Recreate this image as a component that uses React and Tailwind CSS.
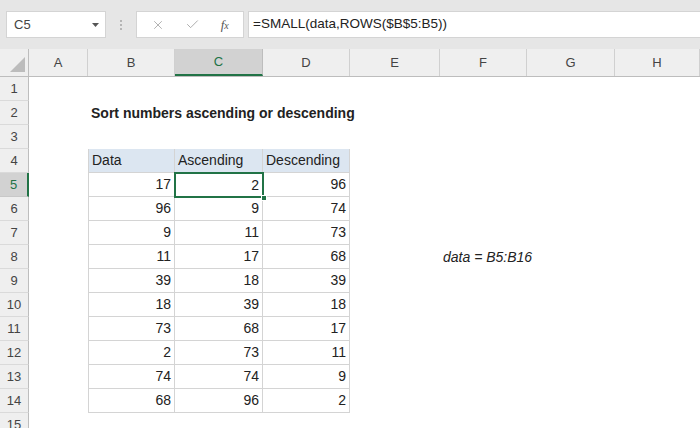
import { X, Check } from 'lucide-react';

const cols = ['A', 'B', 'C', 'D', 'E', 'F', 'G', 'H'];

const data = [
    [17, 2, 96],
    [96, 9, 74],
    [9, 11, 73],
    [11, 17, 68],
    [39, 18, 39],
    [18, 39, 18],
    [73, 68, 17],
    [2, 73, 11],
    [74, 74, 9],
    [68, 96, 2],
];

const gridCols = 'grid grid-cols-[29px_59px_87px_88px_87px_90px_87px_88px_85px]';

const RowHead = ({ n, active }) => (
    <div
        className={
            'flex items-center justify-center border-r border-b text-[13px] ' +
            (active
                ? 'border-b-[#c8c8c8] border-r-2 border-r-[#217346] bg-[#d2d2d2] text-[#217346]'
                : 'border-b-[#dadada] border-r-[#bdbdbd] bg-[#efefef] text-[#444]')
        }
    >
        {n}
    </div>
);

const Cell = ({ children, className = '' }) => (
    <div className={'flex items-center overflow-visible whitespace-nowrap px-[3px] text-[14px] text-[#222] ' + className}>
        {children}
    </div>
);

const tableCell = 'border-r border-b border-[#d4d4d4]';

export default function App() {
    const rows = [];
    for (let r = 1; r <= 15; r++) {
        let cells;
        if (r === 2) {
            cells = (
                <>
                    <Cell />
                    <Cell className="font-bold">Sort numbers ascending or descending</Cell>
                    <Cell />
                    <Cell />
                    <Cell />
                    <Cell />
                    <Cell />
                    <Cell />
                </>
            );
        } else if (r === 4) {
            cells = (
                <>
                    <Cell />
                    <Cell className={tableCell + ' border-l bg-[#dce6f1]'}>Data</Cell>
                    <Cell className={tableCell + ' bg-[#dce6f1]'}>Ascending</Cell>
                    <Cell className={tableCell + ' bg-[#dce6f1]'}>Descending</Cell>
                    <Cell />
                    <Cell />
                    <Cell />
                    <Cell />
                </>
            );
        } else if (r >= 5 && r <= 14) {
            const d = data[r - 5];
            cells = (
                <>
                    <Cell />
                    <Cell className={tableCell + ' border-l justify-end'}>{d[0]}</Cell>
                    {r === 5 ? (
                        <div className="relative">
                            <div className="absolute -top-px -left-px -right-px -bottom-px flex items-center justify-end border-2 border-[#217346] bg-white px-[3px] text-[14px] text-[#222]">
                                {d[1]}
                            </div>
                            <div className="absolute -bottom-[4px] -right-[4px] h-[6px] w-[6px] border border-white bg-[#217346]" />
                        </div>
                    ) : (
                        <Cell className={tableCell + ' justify-end'}>{d[1]}</Cell>
                    )}
                    <Cell className={tableCell + ' justify-end'}>{d[2]}</Cell>
                    <Cell />
                    {r === 8 ? (
                        <Cell className="italic">data = B5:B16</Cell>
                    ) : (
                        <Cell />
                    )}
                    <Cell />
                    <Cell />
                </>
            );
        } else {
            cells = (
                <>
                    {cols.map((c) => (
                        <Cell key={c} />
                    ))}
                </>
            );
        }
        rows.push(
            <div key={r} className={gridCols + ' h-[24px]'}>
                <RowHead n={r} active={r === 5} />
                {cells}
            </div>
        );
    }

    return (
        <div className="h-[428px] w-[700px] overflow-hidden bg-white font-['Liberation_Sans',Arial,sans-serif]">
            {/* formula bar */}
            <div className="flex h-[49px] items-center bg-[#e6e6e6]">
                <div className="ml-[6px] flex h-[27px] w-[100px] items-center justify-between border border-[#d4d4d4] bg-white pl-[7px] pr-[6px] text-[13px] text-[#444]">
                    <span>C5</span>
                    <svg width="7" height="4" viewBox="0 0 7 4">
                        <path d="M0 0h7L3.5 4z" fill="#555" />
                    </svg>
                </div>
                <div className="mx-[14px] flex flex-col gap-[2px]">
                    <span className="h-[2px] w-[2px] bg-[#b5b5b5]" />
                    <span className="h-[2px] w-[2px] bg-[#b5b5b5]" />
                    <span className="h-[2px] w-[2px] bg-[#b5b5b5]" />
                </div>
                <div className="flex h-[27px] w-[108px] items-center justify-around border border-[#d4d4d4] bg-white px-[4px]">
                    <X size={14} strokeWidth={1.3} color="#9a9a9a" />
                    <Check size={15} strokeWidth={1.3} color="#9a9a9a" />
                    <span className="font-['Liberation_Serif',serif] text-[13px] italic text-[#555]">
                        f<span className="text-[10px]">x</span>
                    </span>
                </div>
                <div className="ml-[4px] flex h-[27px] flex-1 items-center border border-r-0 border-[#d4d4d4] bg-white pl-[4px] text-[13.5px] text-[#222]">
                    =SMALL(data,ROWS($B$5:B5))
                </div>
            </div>
            {/* column headers */}
            <div className={gridCols + ' h-[28px] border-b border-[#bdbdbd] bg-[#efefef]'}>
                <div className="flex items-end justify-end border-r border-[#bdbdbd] pb-[4px] pr-[3px]">
                    <svg width="15" height="15" viewBox="0 0 15 15">
                        <path d="M15 0V15H0z" fill="#bcbcbc" />
                    </svg>
                </div>
                {cols.map((c) => (
                    <div
                        key={c}
                        className={
                            'flex items-center justify-center text-[13px] ' +
                            (c === 'C'
                                ? 'border-b-2 border-r border-b-[#217346] border-r-[#bdbdbd] bg-[#d2d2d2] text-[#217346]'
                                : 'border-r border-[#d0d0d0] text-[#444]')
                        }
                    >
                        {c}
                    </div>
                ))}
            </div>
            {rows}
        </div>
    );
}
